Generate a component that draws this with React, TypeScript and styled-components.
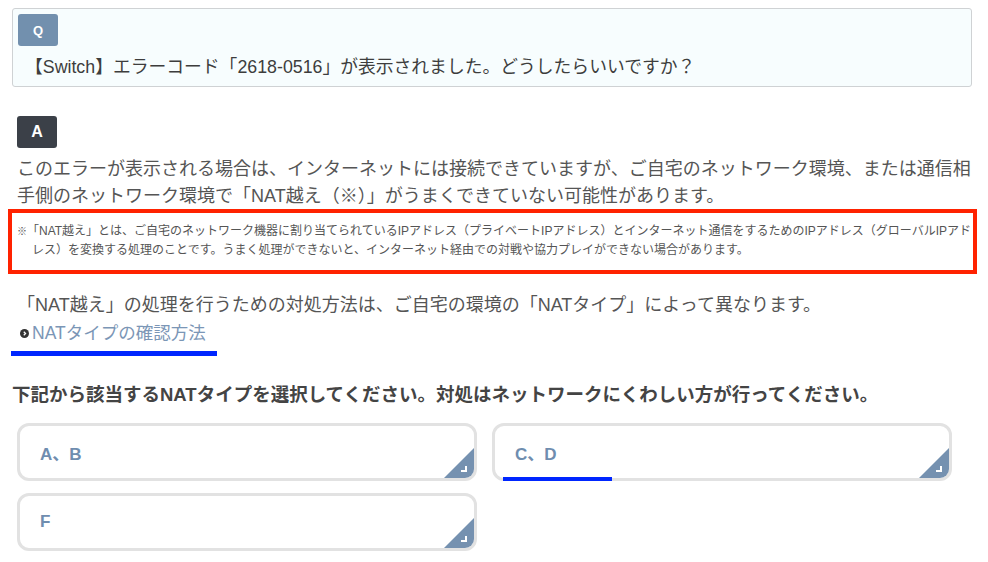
import styled, { createGlobalStyle } from "styled-components";

const GlobalStyle = createGlobalStyle`
  html, body {
    margin: 0;
    padding: 0;
    background: #ffffff;
  }
  body {
    font-family: "Liberation Sans", "Noto Sans CJK JP", sans-serif;
    color: #555555;
  }
`;

const options = [
  { label: "A、B", marked: false },
  { label: "C、D", marked: true },
  { label: "F", marked: false },
];

const App = () => {
  return (
    <>
      <GlobalStyle />
      <Page>
        <QuestionBox>
          <Badge $tone="question">Q</Badge>
          <QuestionText>
            【Switch】エラーコード「2618-0516」が表示されました。どうしたらいいですか？
          </QuestionText>
        </QuestionBox>

        <AnswerBlock $gap={29}>
          <Badge $tone="answer">A</Badge>
          <AnswerText $spaced>
            このエラーが表示される場合は、インターネットには接続できていますが、ご自宅のネットワーク環境、または通信相手側のネットワーク環境で「NAT越え（※）」がうまくできていない可能性があります。
          </AnswerText>
        </AnswerBlock>

        <NoteBox>
          <NoteText>
            <NoteMark>※</NoteMark>
            「NAT越え」とは、ご自宅のネットワーク機器に割り当てられているIPアドレス（プライベートIPアドレス）とインターネット通信をするためのIPアドレス（グローバルIPアドレス）を変換する処理のことです。うまく処理ができないと、インターネット経由での対戦や協力プレイができない場合があります。
          </NoteText>
        </NoteBox>

        <AnswerBlock $gap={18}>
          <AnswerText>
            「NAT越え」の処理を行うための対処方法は、ご自宅の環境の「NATタイプ」によって異なります。
          </AnswerText>
          <LinkRow href="#">
            <LinkIcon viewBox="0 0 10 10">
              <circle cx="5" cy="5" r="5" fill="#333" />
              <path
                d="M4.2 3 L6.2 5 L4.2 7"
                fill="none"
                stroke="#fff"
                strokeWidth="1.4"
              />
            </LinkIcon>
            NATタイプの確認方法
          </LinkRow>
        </AnswerBlock>

        <Heading>
          下記から該当するNATタイプを選択してください。対処はネットワークにくわしい方が行ってください。
        </Heading>

        <OptionGrid>
          {options.map((option) => (
            <OptionButton key={option.label}>
              {option.label}
              <Corner>
                <CornerMark />
              </Corner>
              {option.marked && <Marker />}
            </OptionButton>
          ))}
        </OptionGrid>
      </Page>
    </>
  );
};

const Page = styled.div`
  width: 988px;
  padding-top: 8px;
  padding-bottom: 10px;
`;

const QuestionBox = styled.div`
  margin-left: 12px;
  width: 960px;
  box-sizing: border-box;
  border: 1px solid #cfd2d4;
  border-radius: 3px;
  background: #f7fdfe;
  padding: 5px 5px 6px;
`;

const Badge = styled.div<{ $tone: "question" | "answer" }>`
  width: 40px;
  height: 32px;
  border-radius: 3px;
  display: flex;
  align-items: center;
  justify-content: center;
  color: #ffffff;
  font-weight: 700;
  font-size: ${({ $tone }) => ($tone === "question" ? "13px" : "16px")};
  background: ${({ $tone }) => ($tone === "question" ? "#7290ae" : "#3b4048")};
`;

const QuestionText = styled.p`
  margin: 8px 0 0 7px;
  font-size: 17.8px;
  line-height: 26px;
  color: #3d3d3d;
`;

const AnswerBlock = styled.div<{ $gap: number }>`
  margin-top: ${({ $gap }) => $gap}px;
  padding-left: 17px;
  width: 958px;
`;

const AnswerText = styled.p<{ $spaced?: boolean }>`
  margin: ${({ $spaced }) => ($spaced ? "8px 0 0" : "0")};
  font-size: 18px;
  line-height: 27px;
  color: #555555;
`;

const NoteBox = styled.div`
  margin-left: 8px;
  width: 969px;
  box-sizing: border-box;
  border: 4px solid #ff2200;
  padding: 9px 0 10px 5px;
  margin-top: -1px;
`;

const NoteText = styled.p`
  margin: 0;
  padding-left: 15px;
  text-indent: -15px;
  font-size: 12px;
  line-height: 19px;
  color: #555555;
`;

const NoteMark = styled.span`
  font-size: 10px;
`;

const LinkRow = styled.a`
  display: inline-flex;
  align-items: center;
  gap: 3px;
  margin-left: -6px;
  padding: 1px 11px 5px 9px;
  border-bottom: 5px solid #0026ff;
  font-size: 17.5px;
  line-height: 26px;
  color: #7b96b6;
  text-decoration: none;
`;

const LinkIcon = styled.svg`
  width: 9px;
  height: 9px;
  flex-shrink: 0;
`;

const Heading = styled.h2`
  margin: 25px 0 0 12px;
  font-size: 18.5px;
  line-height: 27px;
  font-weight: 700;
  color: #444444;
`;

const OptionGrid = styled.div`
  margin: 15px 0 0 17px;
  display: grid;
  grid-template-columns: 460px 460px;
  column-gap: 15px;
  row-gap: 12px;
`;

const OptionButton = styled.div`
  position: relative;
  height: 58px;
  box-sizing: border-box;
  border: 3px solid #e2e2e2;
  border-radius: 12px;
  background: #ffffff;
  display: flex;
  align-items: center;
  padding-left: 20px;
  font-size: 17px;
  font-weight: 700;
  color: #6f8daf;
`;

const Corner = styled.span`
  position: absolute;
  right: 0;
  bottom: 0;
  width: 30px;
  height: 30px;
  background: #7591b0;
  clip-path: polygon(100% 0, 100% 100%, 0 100%);
  border-bottom-right-radius: 9px;
`;

const CornerMark = styled.span`
  position: absolute;
  right: 7px;
  bottom: 6px;
  width: 4px;
  height: 4px;
  border-right: 2px solid #ffffff;
  border-bottom: 2px solid #ffffff;
`;

const Marker = styled.span`
  position: absolute;
  left: 8px;
  bottom: -3px;
  width: 109px;
  height: 4px;
  background: #0026ff;
`;

export default App;
